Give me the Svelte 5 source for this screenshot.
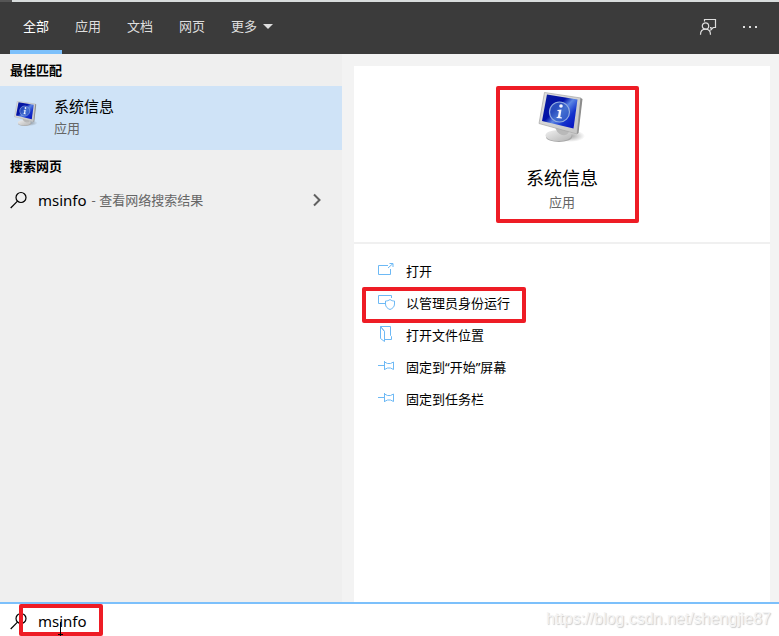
<script>
  const tabs = ['全部', '应用', '文档', '网页'];
  const actions = [
    { icon: 'open', label: '打开' },
    { icon: 'admin', label: '以管理员身份运行', marked: true },
    { icon: 'folder', label: '打开文件位置' },
    { icon: 'pin', label: '固定到“开始”屏幕' },
    { icon: 'pin', label: '固定到任务栏' }
  ];
  let active = $state('全部');
  let query = $state('msinfo');
</script>

{#snippet monitor(id)}
  <svg class="monitor" viewBox="0 0 48 52" aria-hidden="true">
    <defs>
      <linearGradient id="{id}-screen" x1="0" y1="0" x2="1" y2=".9">
        <stop offset="0" stop-color="#0a1c9c" />
        <stop offset=".42" stop-color="#0212a8" />
        <stop offset=".56" stop-color="#5c86e4" />
        <stop offset=".75" stop-color="#1433cc" />
        <stop offset="1" stop-color="#0510c0" />
      </linearGradient>
      <linearGradient id="{id}-frame" x1="0" y1="0" x2="1" y2="1">
        <stop offset="0" stop-color="#e2e2e2" />
        <stop offset="1" stop-color="#c4c4c4" />
      </linearGradient>
      <linearGradient id="{id}-base" x1="0" y1="0" x2="1" y2="1">
        <stop offset="0" stop-color="#f0f0f0" />
        <stop offset="1" stop-color="#b4b4b4" />
      </linearGradient>
      <radialGradient id="{id}-shadow">
        <stop offset="0" stop-color="#666" stop-opacity=".6" />
        <stop offset="1" stop-color="#666" stop-opacity="0" />
      </radialGradient>
    </defs>
    <ellipse cx="32" cy="44" rx="15" ry="6" fill="url(#{id}-shadow)" />
    <ellipse cx="21" cy="45" rx="13" ry="5" fill="#a6a6a6" />
    <ellipse cx="20.500" cy="43.500" rx="13" ry="5.500" fill="url(#{id}-base)" />
    <path d="M17 34l14 4q0 6-7 5-6-2-7-9z" fill="#b9b9b9" />
    <path d="M6.500.5L43 6 39 42 1 31.500z" fill="url(#{id}-frame)" stroke="#a6a6a6" stroke-width=".7" />
    <path d="M42.500 6l2 1-4 34-1.500 1z" fill="#8c8c8c" />
    <path d="M9 2.500L39.500 7.500 35.500 36.500 4 29z" fill="url(#{id}-screen)" />
    <circle cx="21.500" cy="20" r="10" fill="#3b66c8" fill-opacity=".7" stroke="#94addf" stroke-width="1.200" />
    <circle cx="23" cy="14" r="1.800" fill="#f4f6ff" />
    <path d="M19.500 18l4-.5-1.200 7.500 1.700.5-.2 1-5.300-.6.200-1 1.200-.1 1-5.600-1.500-.2z" fill="#f4f6ff" />
  </svg>
{/snippet}

{#snippet magnifier()}
  <svg class="magnifier" viewBox="0 0 18 18" aria-hidden="true">
    <circle cx="11" cy="6.500" r="5" />
    <path d="M7.500 10.200L.7 17" />
  </svg>
{/snippet}

{#snippet actionIcon(name)}
  <svg class="action-icon" viewBox="0 0 18 18" aria-hidden="true">
    {#if name === 'open'}
      <path d="M10 3.500H.5v9h12V7M10 6l5-4.500M11.500 1.500h3.500v3.500" />
    {:else if name === 'admin'}
      <path d="M7 9.500H.5v-8h13V4M12 5.500c-1.500 1.200-2.800 1.500-4.500 1.500v3c0 3 2 4.500 4.500 5.500 2.500-1 4.500-2.500 4.500-5.500V7c-1.700 0-3-.3-4.500-1.500z" />
    {:else if name === 'folder'}
      <path d="M2.500.5v12l4 3v-10zM2.500.5h10v9l1 1v3h-7M3 1l3.500 4.500" />
    {:else}
      <path d="M0 7.500h6.500M6.500 3v9M6.500 4l3 1.500h3l3-1.500v7.500l-3-1.500h-3l-3 1.500" />
    {/if}
  </svg>
{/snippet}

<div class="shell">
  <div class="backdrop"></div>
  <header>
    <nav>
      {#each tabs as tab}
        <button class="tab" class:active={active === tab} onclick={() => (active = tab)}>{tab}</button>
      {/each}
      <button class="tab">更多<span class="caret"></span></button>
    </nav>
    <div class="tools">
      <button class="tool" aria-label="反馈">
        <svg viewBox="0 0 18 18" aria-hidden="true">
          <circle cx="6.500" cy="8" r="3.200" />
          <path d="M1.500 16.800c0-3.500 2-5.600 5-5.600s5 2.100 5 5.600M5.500 3.500v-2h11v8h-2.300l-2.200 2.300V9.500h-1" />
        </svg>
      </button>
      <button class="tool" aria-label="选项">
        <svg viewBox="0 0 18 18" aria-hidden="true">
          <path class="dots" d="M2 8h2v2H2zM8 8h2v2H8zM14 8h2v2h-2z" />
        </svg>
      </button>
    </div>
  </header>

  <main>
    <section class="results">
      <h2>最佳匹配</h2>
      <button class="best">
        <span class="small">{@render monitor('small')}</span>
        <span class="best-text"><span class="name">系统信息</span><span class="kind">应用</span></span>
      </button>
      <h2>搜索网页</h2>
      <button class="web">
        {@render magnifier()}
        <span class="term">msinfo</span>
        <span class="hint">- 查看网络搜索结果</span>
        <svg class="chevron" viewBox="0 0 10 14" aria-hidden="true"><path d="M2 1.500L7.500 7 2 12.500" /></svg>
      </button>
    </section>

    <section class="preview">
      <div class="card">
        <div class="hero">
          <div class="app">
            {@render monitor('large')}
            <h1>系统信息</h1>
            <p>应用</p>
            <span class="mark app-mark"></span>
          </div>
        </div>
        <ul>
          {#each actions as action}
            <li>
              <button class="action">
                {@render actionIcon(action.icon)}
                <span>{action.label}</span>
                {#if action.marked}<span class="mark action-mark"></span>{/if}
              </button>
            </li>
          {/each}
        </ul>
      </div>
    </section>
  </main>

  <footer>
    <label for="query" aria-label="搜索">{@render magnifier()}</label>
    <input id="query" type="text" bind:value={query} />
    <span class="watermark">https://blog.csdn.net/shengjie87</span>
    <span class="mark query-mark"></span>
    <svg class="ibeam" viewBox="0 0 7 14" aria-hidden="true"><path d="M3.500 0v14M1 12.500h5" /></svg>
  </footer>
</div>

<style>
  :global(body) {
    margin: 0;
  }
  .shell {
    display: flex;
    flex-direction: column;
    min-height: 100vh;
    font-family: 'Noto Sans', 'Noto Sans CJK SC', sans-serif;
    font-size: 13px;
    line-height: 20px;
    color: #000;
    background: #f3f3f3;
  }
  .shell * {
    box-sizing: border-box;
  }
  button,
  input {
    margin: 0;
    padding: 0;
    border: 0;
    background: none;
    font: inherit;
    color: inherit;
    text-align: left;
  }
  svg {
    display: block;
    flex: none;
    fill: none;
    stroke: currentColor;
  }
  .monitor {
    stroke: none;
  }
  .backdrop {
    height: 2px;
    background: linear-gradient(90deg, #555 12px, #d8dcdc 12px);
  }
  header {
    display: flex;
    justify-content: space-between;
    height: 52px;
    padding: 0 20px 0 10px;
    background: #3b3b3b;
    color: #dedede;
  }
  nav {
    display: flex;
  }
  .tab {
    display: flex;
    align-items: center;
    height: 52px;
    padding: 0 13px 4px;
  }
  .tab.active {
    padding-bottom: 0;
    border-bottom: 4px solid #7cc0fb;
    color: #fff;
  }
  .caret {
    margin-left: 6px;
    border: 5px solid transparent;
    border-top-color: #dedede;
    border-bottom: 0;
  }
  .tools {
    display: flex;
    align-items: center;
    gap: 24px;
    padding-bottom: 2px;
  }
  .tool svg {
    width: 18px;
    height: 18px;
    stroke-width: 1.200;
  }
  .tool .dots {
    fill: currentColor;
    stroke: none;
  }
  main {
    display: flex;
    flex: 1;
  }
  .results {
    flex: 0 0 342px;
    background: #efefef;
  }
  h2 {
    margin: 0;
    padding: 6px 10px;
    font-size: 13px;
    line-height: 20px;
    font-weight: 700;
  }
  .best {
    display: flex;
    gap: 16px;
    width: 100%;
    height: 64px;
    padding: 8px 14px;
    background: #cfe3f7;
  }
  .small {
    width: 24px;
    padding-top: 7px;
  }
  .small .monitor {
    width: 24px;
    height: 26px;
  }
  .best-text {
    display: flex;
    flex-direction: column;
  }
  .name {
    font-size: 15px;
    line-height: 24px;
  }
  .kind,
  .hint {
    color: #666;
  }
  .web {
    display: flex;
    align-items: center;
    width: 100%;
    height: 36px;
    padding: 0 20px 0 10px;
  }
  .magnifier {
    width: 18px;
    height: 18px;
    stroke-width: 1.200;
  }
  .term {
    margin: 0 5px 0 10px;
    font-size: 15px;
  }
  .chevron {
    width: 10px;
    height: 14px;
    margin-left: auto;
    color: #606060;
    stroke-width: 2;
  }
  .preview {
    display: flex;
    flex: 1;
    padding: 12px 9px 0 12px;
  }
  .card {
    flex: 1;
    background: #fff;
  }
  .hero {
    display: flex;
    justify-content: center;
    height: 178px;
    padding-top: 26px;
    border-bottom: 2px solid #f0f0f0;
  }
  .app {
    position: relative;
    display: flex;
    flex-direction: column;
    align-items: center;
  }
  .app .monitor {
    width: 48px;
    height: 52px;
  }
  h1 {
    margin: 20px 0 0;
    font-size: 18px;
    line-height: 28px;
    font-weight: 400;
  }
  p {
    margin: 0;
    color: #666;
  }
  ul {
    margin: 0;
    padding: 11px 24px;
    list-style: none;
  }
  .action {
    position: relative;
    display: flex;
    align-items: center;
    gap: 10px;
    height: 32px;
  }
  .action-icon {
    width: 18px;
    height: 18px;
    color: #6db9f5;
  }
  .mark {
    position: absolute;
    border: 4px solid #ee1c25;
    border-radius: 2px;
    pointer-events: none;
  }
  .app-mark {
    top: -6px;
    right: -41px;
    left: -30px;
    height: 137px;
  }
  .action-mark {
    inset: 0 -16px -4px;
  }
  .query-mark {
    top: 0;
    bottom: 0;
    left: 19px;
    width: 84px;
  }
  footer {
    position: relative;
    display: flex;
    align-items: center;
    gap: 10px;
    height: 34px;
    padding: 2px 8px 0 10px;
    border-top: 2px solid #7cc0fb;
    background: #fff;
  }
  input {
    flex: 1;
    min-width: 0;
    height: 28px;
    font-size: 15px;
    outline: 0;
  }
  .watermark {
    padding-bottom: 4px;
    font-family: 'Liberation Sans', Arial, sans-serif;
    font-size: 16px;
    color: #f4f4f4;
    text-shadow: 1px 1px 1px #ccc;
  }
  .ibeam {
    position: absolute;
    left: 57px;
    bottom: 0;
    width: 7px;
    height: 14px;
  }
</style>
